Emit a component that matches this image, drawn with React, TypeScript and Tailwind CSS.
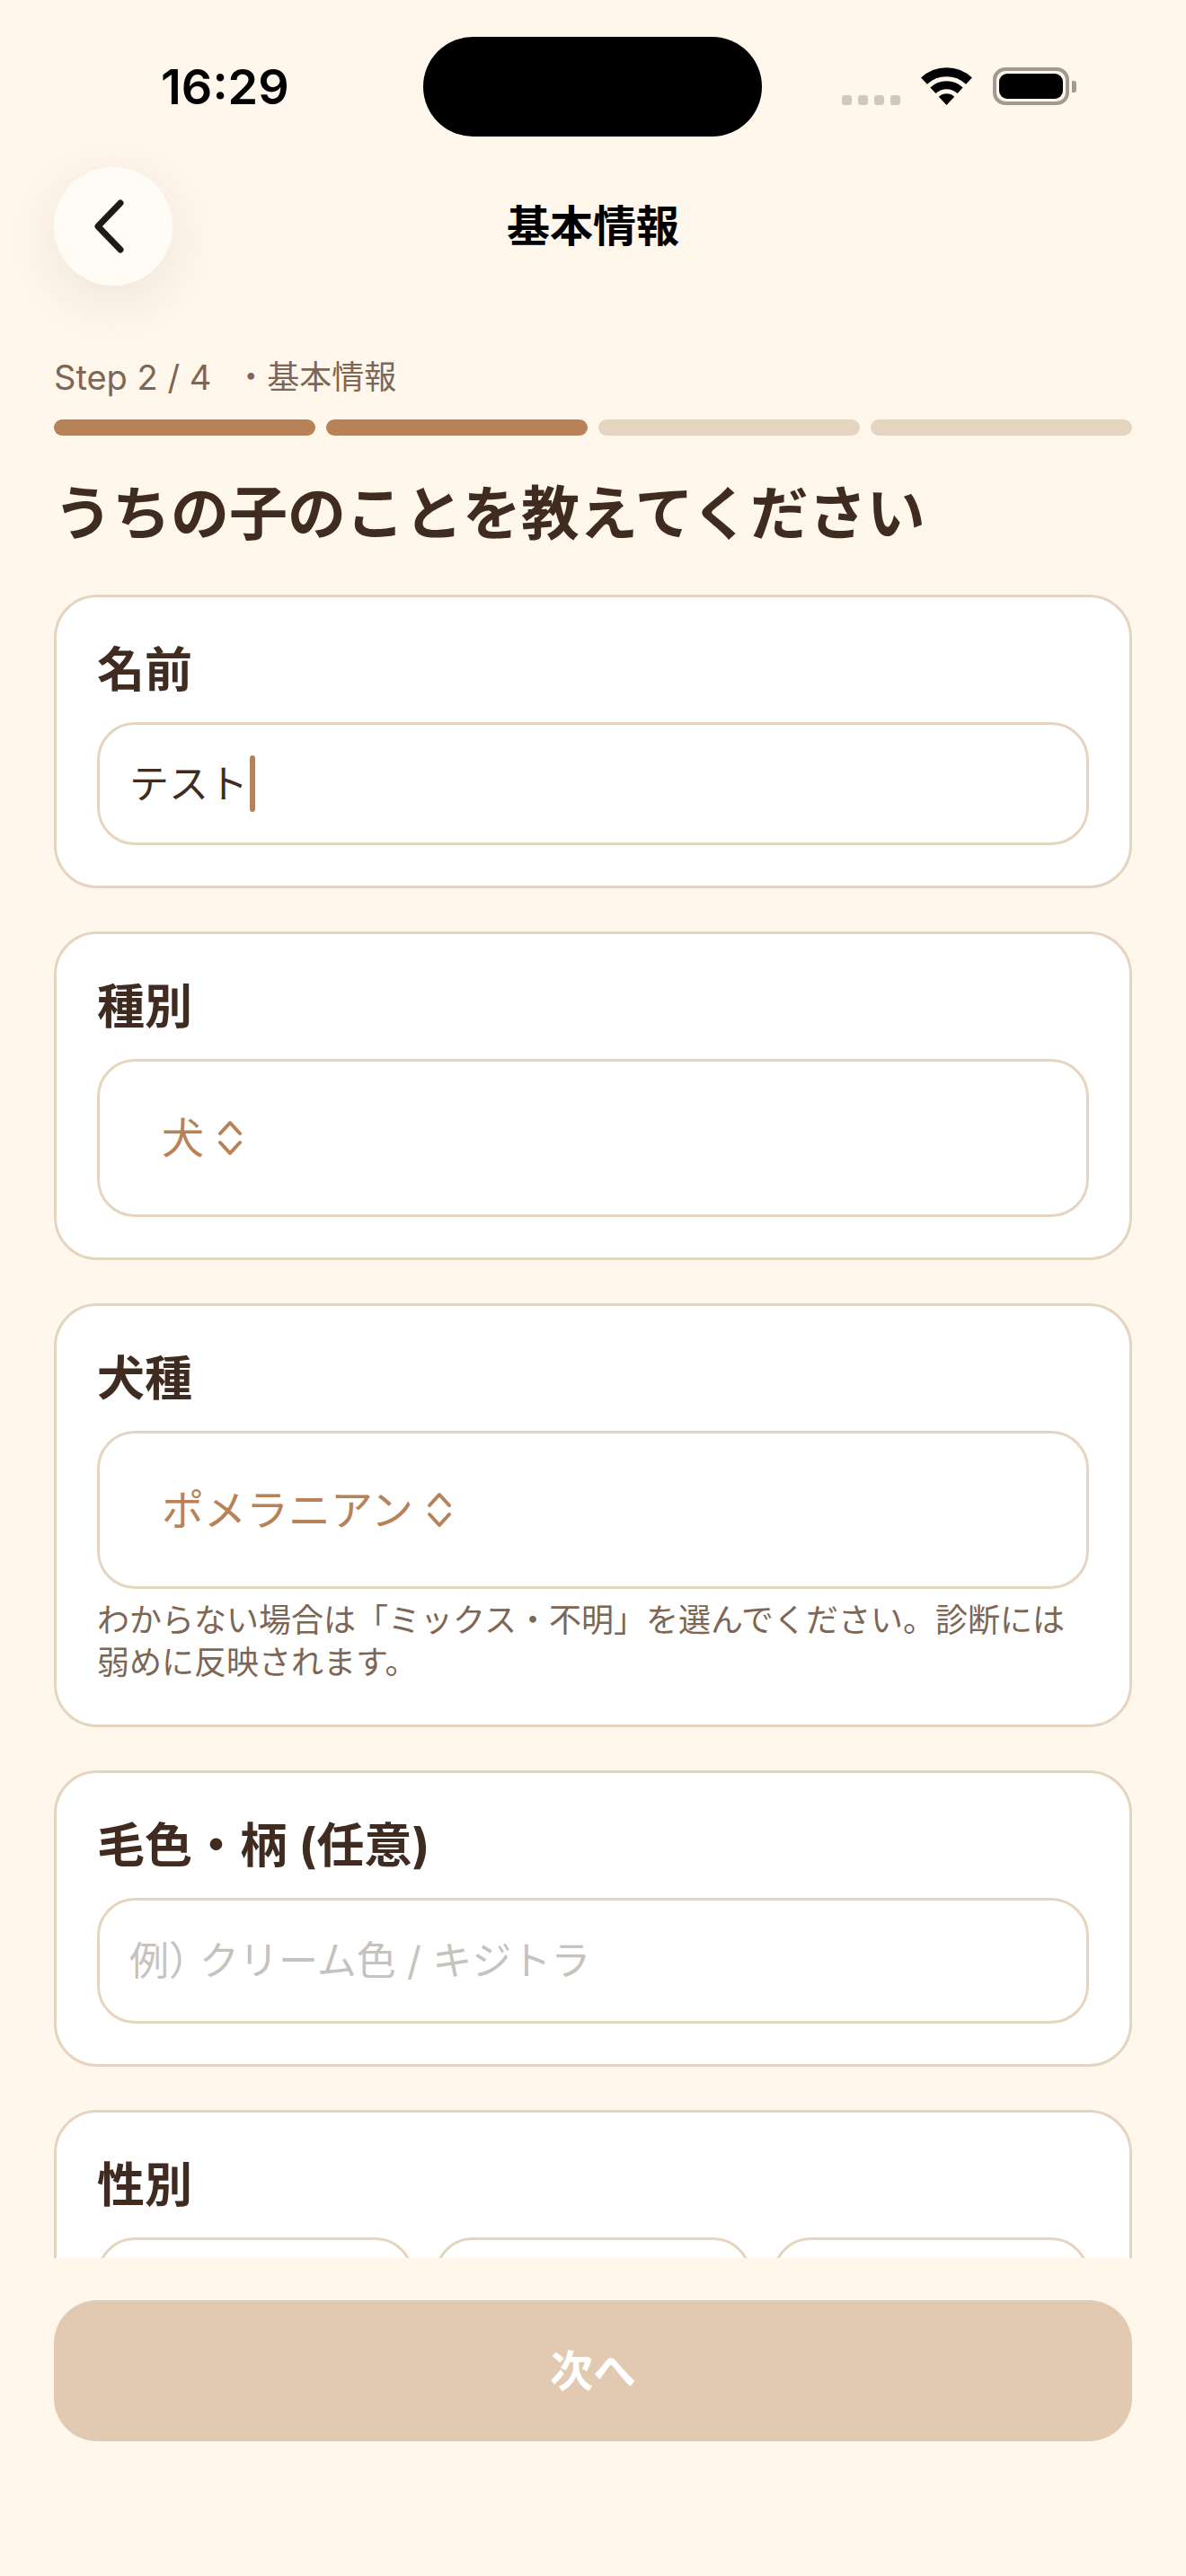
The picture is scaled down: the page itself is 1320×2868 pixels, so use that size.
import React from "react";

const Updown = () => (
  <svg width="30" height="42" viewBox="0 0 30 42" fill="none" stroke="#b88259" strokeWidth="4" strokeLinecap="round" strokeLinejoin="round" className="shrink-0">
    <path d="M4 16 15 4l11 12" />
    <path d="M4 26l11 12 11-12" />
  </svg>
);

const Label = ({ children }: { children: React.ReactNode }) => (
  <div className="text-[53px] leading-[72px] font-bold text-[#3f2b20]">{children}</div>
);

const Card = ({ children, tight }: { children: React.ReactNode; tight?: boolean }) => (
  <section className={tight ? "shrink-0 rounded-[48px] border-[3px] border-[#e5d5c0] bg-white px-[45px] pt-[45px] pb-[27px]" : "shrink-0 rounded-[48px] border-[3px] border-[#e5d5c0] bg-white px-[45px] pt-[45px] pb-[45px]"}>{children}</section>
);

const SelectBox = ({ value }: { value: string }) => (
  <div className="mt-[22px] flex h-[176px] items-center gap-[14px] rounded-[42px] border-[3px] border-[#e5d5c0] bg-white pl-[69px] text-[47px] text-[#b88259]">
    <span>{value}</span>
    <Updown />
  </div>
);

export default function App() {
  return (
    <div className="flex h-[2868px] w-[1320px] flex-col overflow-hidden bg-[#fff6ec] font-['Inter','Noto_Sans_CJK_JP',sans-serif]">
      <div className="flex h-[186px] shrink-0 items-start pt-[41px]">
        <div className="w-[471px] pl-[179px] pt-[25px] text-[54px] leading-[62px] font-semibold text-black">16:29</div>
        <div className="h-[111px] w-[377px] rounded-[56px] bg-black" />
        <div className="flex h-[76px] flex-1 items-end pl-[89px]">
          <div className="flex gap-[7px]">
            {[0, 1, 2, 3].map((i) => (
              <span key={i} className="h-[11px] w-[11px] rounded-[3px] bg-[#cfc8c0]" />
            ))}
          </div>
          <svg width="57" height="42" viewBox="0 0 57 42" className="ml-[23px]">
            <path d="M3.5 15.2A36.7 36.7 0 0 1 53.5 15.2" fill="none" stroke="#000" strokeWidth="10" />
            <path d="M13.4 25.8A22.2 22.2 0 0 1 43.6 25.8" fill="none" stroke="#000" strokeWidth="9" />
            <path d="M28.5 42 19.8 32.7A12.7 12.7 0 0 1 37.2 32.7Z" fill="#000" />
          </svg>
          <div className="ml-[23px] flex items-center gap-[3px]">
            <div className="flex h-[42px] w-[85px] items-center justify-center rounded-[14px] border-[4px] border-[#a09a92]">
              <div className="h-[28px] w-[71px] rounded-[9px] bg-black" />
            </div>
            <div className="h-[13px] w-[5px] rounded-r-[3px] bg-[#a09a92]" />
          </div>
        </div>
      </div>

      <header className="grid h-[132px] shrink-0 grid-cols-[132px_1fr_132px] items-center px-[60px]">
        <button className="flex h-[132px] w-[132px] items-center justify-center rounded-full bg-[#fffcf6] shadow-[0_16px_60px_rgba(90,60,30,0.09)]">
          <svg width="36" height="60" viewBox="0 0 36 60" fill="none" stroke="#1f1a14" strokeWidth="7" strokeLinecap="round" strokeLinejoin="round" className="-ml-[10px]">
            <path d="M31 4 6 30l25 26" />
          </svg>
        </button>
        <h1 className="text-center text-[48px] leading-[64px] font-bold text-black">基本情報</h1>
      </header>

      <div className="flex min-h-0 flex-1 flex-col overflow-hidden px-[60px] pt-[80px]">
        <div className="flex shrink-0 items-center text-[36px] leading-[44px] text-[#7d6653]">
          <span className="text-[38px]">Step 2 / 4</span>
          <span className="ml-[26px]">・基本情報</span>
        </div>
        <div className="mt-[25px] grid shrink-0 grid-cols-4 gap-[12px]">
          <div className="h-[18px] rounded-full bg-[#b88259]" />
          <div className="h-[18px] rounded-full bg-[#b88259]" />
          <div className="h-[18px] rounded-full bg-[#e5d5c0]" />
          <div className="h-[18px] rounded-full bg-[#e5d5c0]" />
        </div>
        <h2 className="mt-[41px] shrink-0 text-[65px] leading-[92px] font-bold text-[#3f2b20]">うちの子のことを教えてください</h2>

        <div className="mt-[44px] flex flex-col gap-[48px]">
          <Card>
            <Label>名前</Label>
            <div className="mt-[22px] flex h-[137px] items-center rounded-[42px] border-[3px] border-[#e5d5c0] bg-white pl-[33px] text-[44px] text-[#3f2b20]">
              <span>テスト</span>
              <span className="ml-[2px] h-[63px] w-[6px] rounded-full bg-[#b88259]" />
            </div>
          </Card>
          <Card>
            <Label>種別</Label>
            <SelectBox value="犬" />
          </Card>
          <Card tight>
            <Label>犬種</Label>
            <SelectBox value="ポメラニアン" />
            <p className="mt-[12px] pb-[18px] text-[36px] leading-[47px] text-[#7d6653]">
              わからない場合は「ミックス・不明」を選んでください。診断には弱めに反映されます。
            </p>
          </Card>
          <Card>
            <Label>毛色・柄 (任意)</Label>
            <div className="mt-[22px] flex h-[140px] items-center rounded-[42px] border-[3px] border-[#e5d5c0] bg-white pl-[33px] text-[44px] text-[#c6c2bd]">
              <span className="-mr-[10px]">例）</span>
              <span>クリーム色 / キジトラ</span>
            </div>
          </Card>
          <Card>
            <Label>性別</Label>
            <div className="mt-[22px] grid grid-cols-3 gap-[24px]">
              <div className="h-[120px] rounded-[42px] border-[3px] border-[#e5d5c0]" />
              <div className="h-[120px] rounded-[42px] border-[3px] border-[#e5d5c0]" />
              <div className="h-[120px] rounded-[42px] border-[3px] border-[#e5d5c0]" />
            </div>
          </Card>
        </div>
      </div>

      <footer className="h-[354px] shrink-0 px-[60px] pt-[47px]">
        <button className="flex h-[157px] w-full items-center justify-center rounded-[48px] bg-[#e2c9b2] text-[48px] font-bold text-white">次へ</button>
      </footer>
    </div>
  );
}
